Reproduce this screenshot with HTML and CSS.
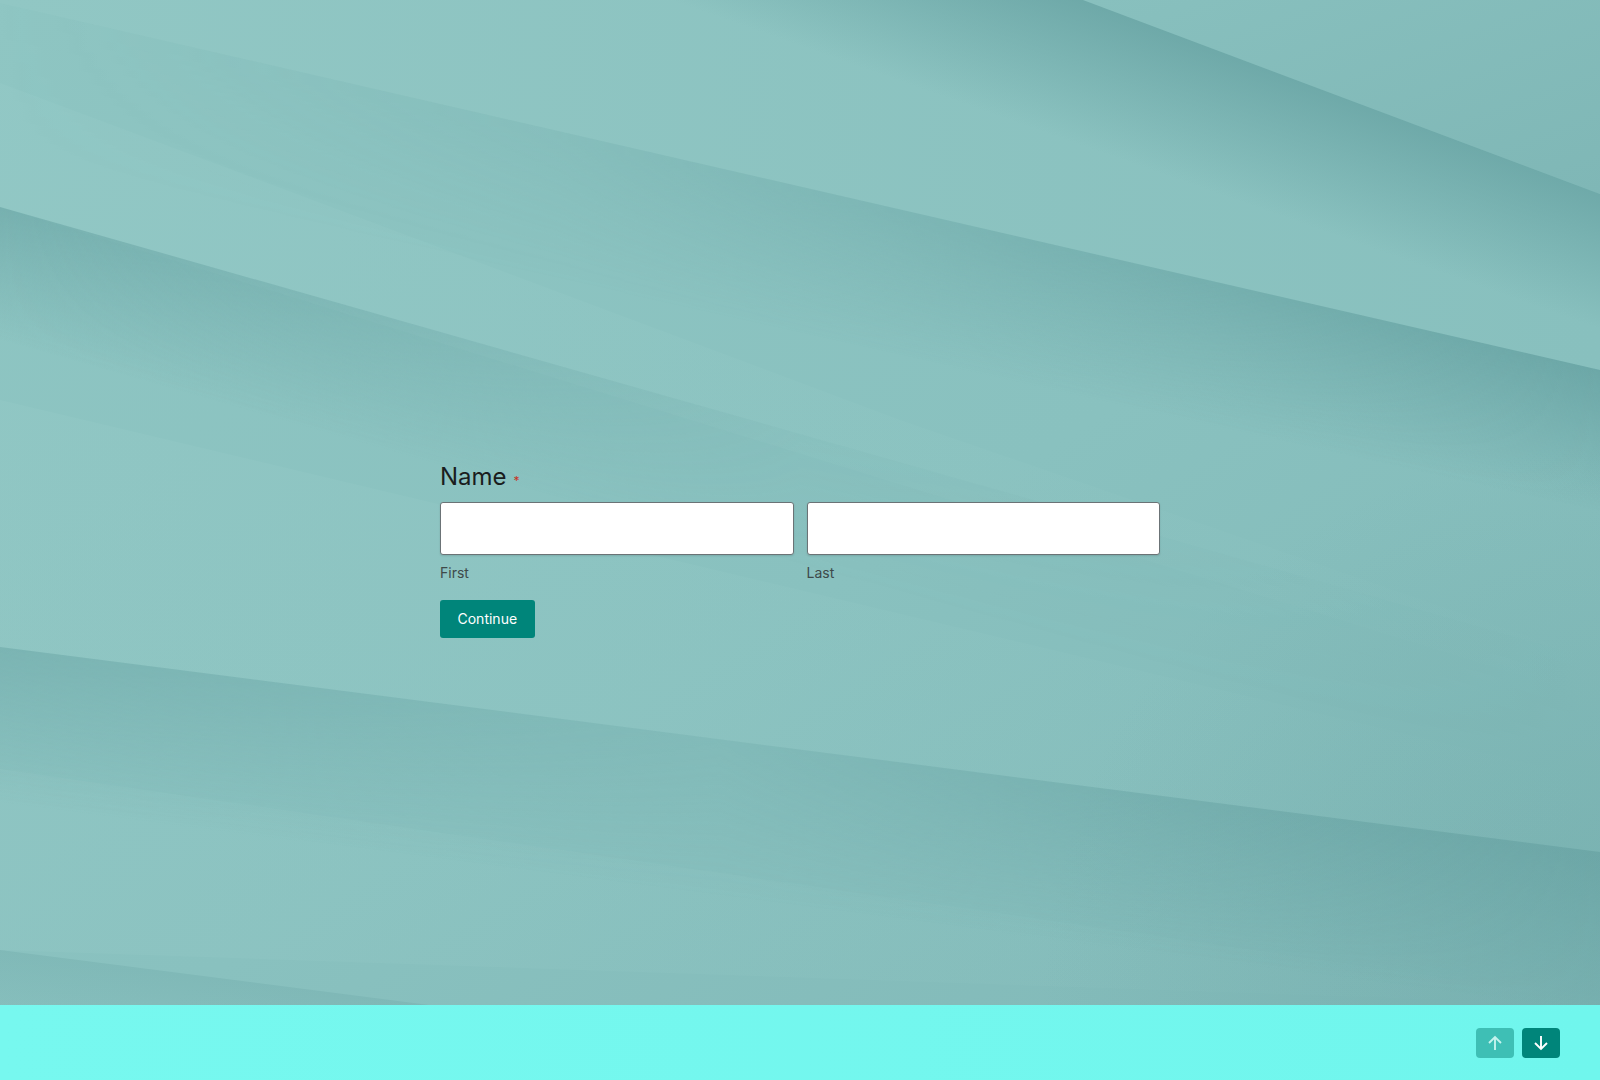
FILE: index.html
```html
<!DOCTYPE html>
<html lang="en">
<head>
<meta charset="utf-8">
<title>Name</title>
<link rel="stylesheet" href="styles.css">
</head>
<body>
<div class="page">
  <svg class="bg" viewBox="0 0 1600 1005" preserveAspectRatio="none" aria-hidden="true">
    <defs>
      <linearGradient id="base" x1="0" y1="0" x2="1" y2="1">
        <stop offset="0" stop-color="#8fc6c3"/>
        <stop offset="0.55" stop-color="#89c1bf"/>
        <stop offset="1" stop-color="#80b8b7"/>
      </linearGradient>
      <linearGradient id="topband" x1="0" y1="0" x2="1" y2="0">
        <stop offset="0" stop-color="#91c7c4"/>
        <stop offset="1" stop-color="#88c0be"/>
      </linearGradient>
      <linearGradient id="shard" x1="0" y1="0" x2="1" y2="1">
        <stop offset="0" stop-color="#88c0be"/>
        <stop offset="1" stop-color="#7fb7b6"/>
      </linearGradient>
      <linearGradient id="shShard" gradientUnits="userSpaceOnUse" x1="1083" y1="0" x2="1037" y2="130">
        <stop offset="0" stop-color="#5b9899" stop-opacity="0.6"/>
        <stop offset="1" stop-color="#5b9899" stop-opacity="0"/>
      </linearGradient>
      <linearGradient id="shA" gradientUnits="userSpaceOnUse" x1="1600" y1="370" x2="1570" y2="505">
        <stop offset="0" stop-color="#5b9899" stop-opacity="0.6"/>
        <stop offset="1" stop-color="#5b9899" stop-opacity="0"/>
      </linearGradient>
      <linearGradient id="shC" gradientUnits="userSpaceOnUse" x1="0" y1="207" x2="-35" y2="330">
        <stop offset="0" stop-color="#5b9899" stop-opacity="0.45"/>
        <stop offset="1" stop-color="#5b9899" stop-opacity="0"/>
      </linearGradient>
      <linearGradient id="shD" gradientUnits="userSpaceOnUse" x1="0" y1="647" x2="-20" y2="800">
        <stop offset="0" stop-color="#5b9899" stop-opacity="0.5"/>
        <stop offset="1" stop-color="#5b9899" stop-opacity="0"/>
      </linearGradient>
      <linearGradient id="shE" gradientUnits="userSpaceOnUse" x1="0" y1="950" x2="-7" y2="1010">
        <stop offset="0" stop-color="#6aa5a5" stop-opacity="0.3"/>
        <stop offset="1" stop-color="#6aa5a5" stop-opacity="0.1"/>
      </linearGradient>
      <linearGradient id="light" x1="0" y1="0" x2="1" y2="0">
        <stop offset="0" stop-color="#95cac7" stop-opacity="0.7"/>
        <stop offset="1" stop-color="#95cac7" stop-opacity="0"/>
      </linearGradient>
      <radialGradient id="cornerBR" gradientUnits="userSpaceOnUse" cx="1600" cy="1005" r="560">
        <stop offset="0" stop-color="#6aa4a4" stop-opacity="0.4"/>
        <stop offset="1" stop-color="#6aa4a4" stop-opacity="0"/>
      </radialGradient>
      <linearGradient id="fadeR" x1="0" y1="0" x2="1" y2="0">
        <stop offset="0" stop-color="#000"/>
        <stop offset="0.35" stop-color="#333"/>
        <stop offset="1" stop-color="#fff"/>
      </linearGradient>
      <linearGradient id="fadeL" x1="0" y1="0" x2="1" y2="0">
        <stop offset="0" stop-color="#fff"/>
        <stop offset="0.5" stop-color="#222"/>
        <stop offset="1" stop-color="#000"/>
      </linearGradient>
      <linearGradient id="fadeLR" x1="0" y1="0" x2="1" y2="0">
        <stop offset="0" stop-color="#aaa"/>
        <stop offset="0.45" stop-color="#444"/>
        <stop offset="1" stop-color="#fff"/>
      </linearGradient>
      <mask id="mR" maskUnits="userSpaceOnUse" x="0" y="0" width="1600" height="1005">
        <rect x="0" y="0" width="1600" height="1005" fill="url(#fadeR)"/>
      </mask>
      <mask id="mL" maskUnits="userSpaceOnUse" x="0" y="0" width="1600" height="1005">
        <rect x="0" y="0" width="1600" height="1005" fill="url(#fadeL)"/>
      </mask>
      <mask id="mLR" maskUnits="userSpaceOnUse" x="0" y="0" width="1600" height="1005">
        <rect x="0" y="0" width="1600" height="1005" fill="url(#fadeLR)"/>
      </mask>
    </defs>
    <rect x="0" y="0" width="1600" height="1005" fill="url(#base)"/>
    <polygon points="0,0 1083,0 1600,194 1600,370 0,3" fill="url(#topband)"/>
    <polygon points="0,83 900,420 1600,661 1600,700 0,207" fill="url(#light)" opacity="0.6"/>
    <polygon points="0,400 1600,780 1600,852 0,647" fill="url(#light)" opacity="0.55"/>
    <polygon points="0,769 1600,1000 1600,1005 0,950" fill="url(#light)" opacity="0.4"/>
    <polygon points="1083,0 1600,0 1600,194" fill="url(#shard)"/>
    <polygon points="1083,0 1600,194 1600,370 0,3 0,0" fill="url(#shShard)"/>
    <polygon points="0,3 1600,370 1600,1005 0,1005" fill="url(#shA)" mask="url(#mR)"/>
    <polygon points="0,207 1600,661 1600,1005 0,1005" fill="url(#shC)" mask="url(#mL)"/>
    <polygon points="0,647 1600,852 1600,1005 0,1005" fill="url(#shD)" mask="url(#mLR)"/>
    <polygon points="0,950 429,1005 0,1005" fill="url(#shE)"/>
    <rect x="0" y="0" width="1600" height="1005" fill="url(#cornerBR)"/>
  </svg>

  <main class="stage">
    <form class="form" onsubmit="return false">
      <div class="q-label">
        <span class="q-text">Name</span><span class="req">*</span>
      </div>
      <div class="name-row">
        <label class="field">
          <input class="text-input" type="text" aria-label="First">
          <span class="sub">First</span>
        </label>
        <label class="field">
          <input class="text-input" type="text" aria-label="Last">
          <span class="sub">Last</span>
        </label>
      </div>
      <button class="continue" type="button">Continue</button>
    </form>
  </main>

  <footer class="footer">
    <div class="nav">
      <button class="nav-btn nav-up" type="button" aria-label="Previous">
        <svg viewBox="0 0 16 16" width="16" height="16"><path d="M8 15V2.2M2 8l6-6 6 6" fill="none" stroke="currentColor" stroke-width="1.9"/></svg>
      </button>
      <button class="nav-btn nav-down" type="button" aria-label="Next">
        <svg viewBox="0 0 16 16" width="16" height="16"><path d="M8 1v12.8M2 8l6 6 6-6" fill="none" stroke="currentColor" stroke-width="1.9"/></svg>
      </button>
    </div>
  </footer>
</div>
</body>
</html>
```

FILE: styles.css
```css
* {
  box-sizing: border-box;
}

html, body {
  margin: 0;
  padding: 0;
}

body {
  font-family: Inter, "Noto Sans", "Liberation Sans", sans-serif;
  color: #1b1e1e;
  background: #89c1bf;
}

.page {
  position: relative;
  width: 100%;
  height: 100vh;
  display: flex;
  flex-direction: column;
  overflow: hidden;
}

.bg {
  position: absolute;
  top: 0;
  left: 0;
  width: 100%;
  height: 1005px;
  display: block;
  z-index: 0;
}

.stage {
  position: relative;
  z-index: 1;
  flex: 1;
  display: flex;
  justify-content: center;
  align-items: center;
  padding-top: 94px;
}

.form {
  width: 720px;
}

.q-label {
  font-size: 24px;
  line-height: 29px;
  color: #1a1d1d;
}

.req {
  font-size: 12px;
  line-height: 0;
  color: #c8321f;
  margin-left: 7px;
}

.name-row {
  display: grid;
  grid-template-columns: 1fr 1fr;
  column-gap: 13px;
  margin-top: 11px;
}

.field {
  display: flex;
  flex-direction: column;
}

.text-input {
  display: block;
  width: 100%;
  height: 53px;
  margin: 0;
  padding: 0 12px;
  background: #ffffff;
  border: 1px solid #6b7376;
  border-radius: 3px;
  box-shadow: 0 1px 2px rgba(0, 0, 0, 0.12);
  font-family: inherit;
  font-size: 16px;
  outline: none;
}

.sub {
  margin-top: 9px;
  font-size: 14px;
  line-height: 17px;
  color: #3e4a4a;
}

.continue {
  display: block;
  margin-top: 19px;
  height: 38px;
  padding: 0 17.5px;
  border: none;
  border-radius: 3px;
  background: #00857a;
  color: #ffffff;
  font-family: inherit;
  font-size: 14px;
  font-weight: 400;
  cursor: pointer;
}

.footer {
  position: relative;
  z-index: 1;
  height: 75px;
  flex: 0 0 75px;
  display: flex;
  justify-content: flex-end;
  align-items: center;
  padding-right: 40px;
  background: linear-gradient(to right, #77f8ef, #70f6ed);
}

.nav {
  display: flex;
  gap: 8px;
}

.nav-btn {
  width: 38px;
  height: 30px;
  padding: 0;
  border: none;
  border-radius: 4px;
  display: flex;
  align-items: center;
  justify-content: center;
  cursor: pointer;
}

.nav-up {
  background: #3ebfb5;
  color: #c4f3ee;
}

.nav-down {
  background: #00857a;
  color: #ffffff;
}
```
